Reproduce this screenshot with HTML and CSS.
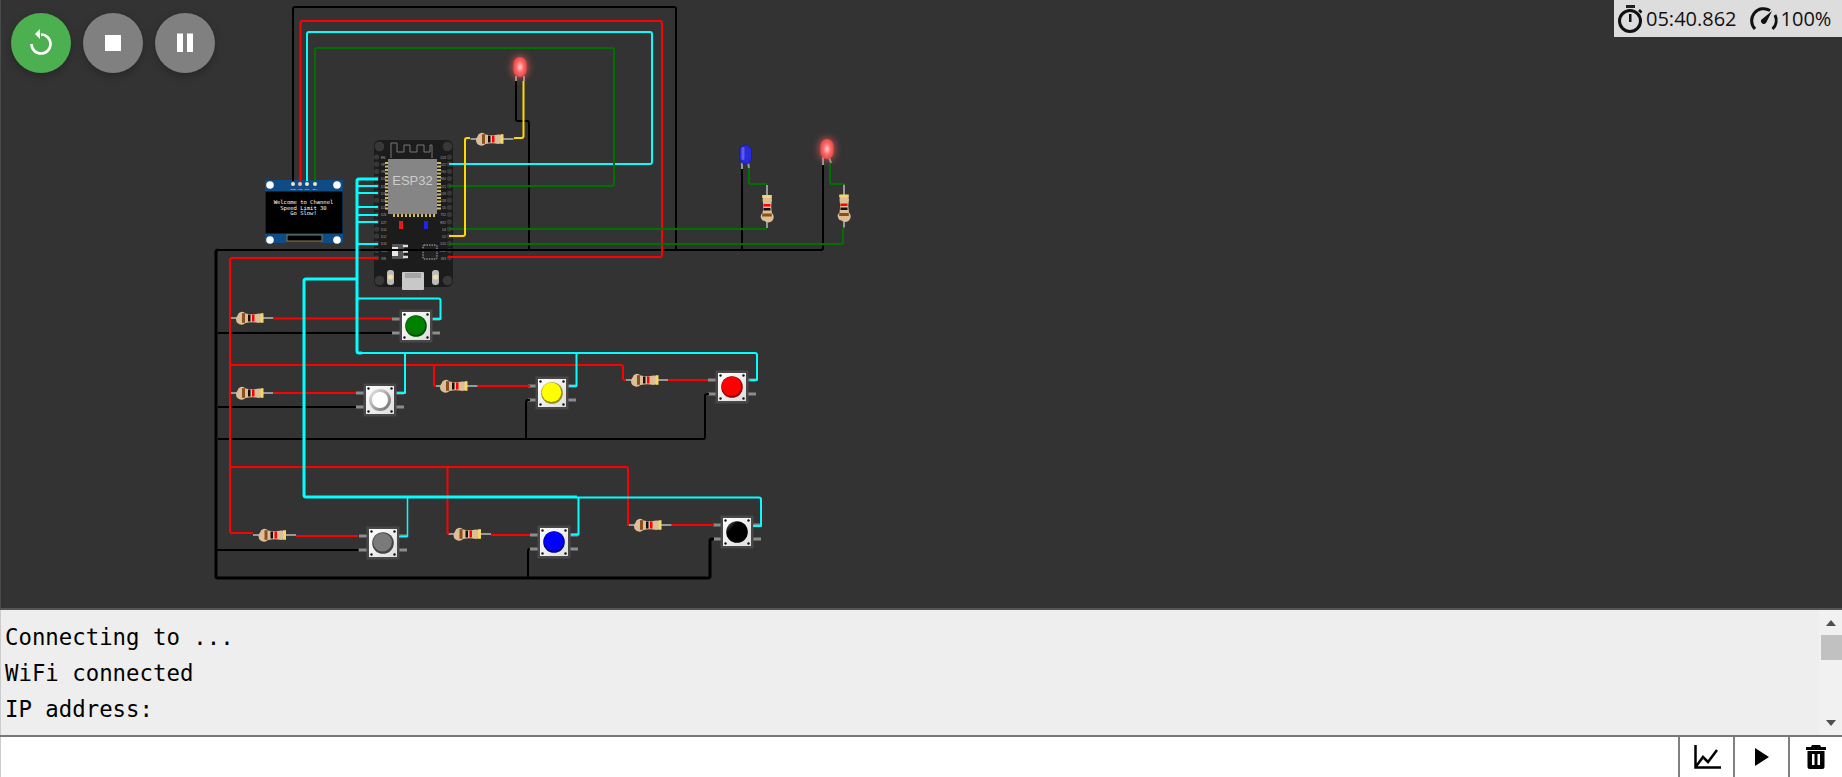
FILE: index.html
```html
<!DOCTYPE html>
<html lang="en">
<head>
  <meta charset="UTF-8" />
  <title>ESP32 simulation</title>
  <link rel="stylesheet" href="styles.css">
</head>
<body>
  <main class="canvas">
    <svg class="board" width="1842" height="608" viewBox="0 0 1842 608">
      <defs>
        <g id="resistor">
          <path class="lead" d="M-21.5 0H21.5" />
          <path class="res-body" d="M-14.5 -2.5a4.5 4.5 0 0 1 8 -2q6.500 1.500 13 0a4.500 4.500 0 0 1 0 9.500q-6.500 -1.500 -13 0a4.500 4.500 0 0 1 -8 -7.500z" />
          <rect x="-10" y="-4.800" width="3" height="9.600" fill="#8b4f1d" />
          <rect x="-4" y="-3.500" width="2.500" height="7" fill="#111" />
          <rect x="0" y="-3.500" width="2.500" height="7" fill="#f00" />
          <rect x="8.500" y="-4.800" width="3" height="9.600" fill="#f3d768" />
        </g>
        <g id="btn-base">
          <rect x="-24" y="-8.500" width="8" height="3" class="pin" />
          <rect x="-24" y="5.500" width="8" height="3" class="pin" />
          <rect x="16" y="-8.500" width="8" height="3" class="pin" />
          <rect x="16" y="5.500" width="8" height="3" class="pin" />
          <rect x="-16.500" y="-16.500" width="33" height="33" fill="#484848" />
          <rect x="-14" y="-14" width="28" height="28" fill="url(#plate)" />
          <circle cx="-11.500" cy="-11.500" r="1.200" fill="#111" />
          <circle cx="11.500" cy="-11.500" r="1.200" fill="#111" />
          <circle cx="-11.500" cy="11.500" r="1.200" fill="#111" />
          <circle cx="11.500" cy="11.500" r="1.200" fill="#111" />
        </g>
        <g id="hole"><circle r="2.600" fill="#383838" /></g>
        <linearGradient id="plate" x1="0" y1="0" x2="1" y2="1">
          <stop offset="0" stop-color="#fff" />
          <stop offset="1" stop-color="#ddd" />
        </linearGradient>
        <linearGradient id="ring" x1="0" y1="0" x2="1" y2="1">
          <stop offset="0" stop-color="#eee" />
          <stop offset="1" stop-color="#666" />
        </linearGradient>
        <linearGradient id="black-cap" x1="0" y1="0" x2="1" y2="1">
          <stop offset="0" stop-color="#777" />
          <stop offset=".3" stop-color="#000" />
        </linearGradient>
        <radialGradient id="lit">
          <stop offset="0" stop-color="#ffd0d0" />
          <stop offset=".55" stop-color="#ff6a6a" />
          <stop offset="1" stop-color="#e84a4a" />
        </radialGradient>
      </defs>

      <!-- ESP32 -->
      <g class="esp">
        <rect x="374" y="140" width="79" height="147" rx="6" fill="#1c1c1c" />
        <circle cx="379.500" cy="146.500" r="4.800" fill="#383838" />
        <circle cx="447.500" cy="146.500" r="4.800" fill="#383838" />
        <circle cx="379.500" cy="280.500" r="4.800" fill="#383838" />
        <circle cx="447.500" cy="280.500" r="4.800" fill="#383838" />
        <path class="antenna" d="M391 158V143H397V152H404V145H410V152H417V145H424V152H430V145H432V158" />
        <use href="#hole" x="376.600" y="157" /><use href="#hole" x="376.600" y="164.200" />
        <use href="#hole" x="376.600" y="171.400" /><use href="#hole" x="376.600" y="178.600" />
        <use href="#hole" x="376.600" y="185.800" /><use href="#hole" x="376.600" y="193" />
        <use href="#hole" x="376.600" y="200.200" /><use href="#hole" x="376.600" y="207.400" />
        <use href="#hole" x="376.600" y="214.600" /><use href="#hole" x="376.600" y="221.800" />
        <use href="#hole" x="376.600" y="229" /><use href="#hole" x="376.600" y="236.200" />
        <use href="#hole" x="376.600" y="243.400" /><use href="#hole" x="376.600" y="250.600" />
        <use href="#hole" x="376.600" y="257.800" />
        <use href="#hole" x="449.400" y="157" /><use href="#hole" x="449.400" y="164.200" />
        <use href="#hole" x="449.400" y="171.400" /><use href="#hole" x="449.400" y="178.600" />
        <use href="#hole" x="449.400" y="185.800" /><use href="#hole" x="449.400" y="193" />
        <use href="#hole" x="449.400" y="200.200" /><use href="#hole" x="449.400" y="207.400" />
        <use href="#hole" x="449.400" y="214.600" /><use href="#hole" x="449.400" y="221.800" />
        <use href="#hole" x="449.400" y="229" /><use href="#hole" x="449.400" y="236.200" />
        <use href="#hole" x="449.400" y="243.400" /><use href="#hole" x="449.400" y="250.600" />
        <use href="#hole" x="449.400" y="257.800" />
        <g class="pin-labels">
          <text x="381" y="159">EN</text><text x="381" y="166">VP</text><text x="381" y="173">VN</text>
          <text x="381" y="180">D34</text><text x="381" y="187.500">D35</text><text x="381" y="194.500">D32</text>
          <text x="381" y="202">D33</text><text x="381" y="209">D25</text><text x="381" y="216">D26</text>
          <text x="381" y="223.500">D27</text><text x="381" y="231">D14</text><text x="381" y="238">D12</text>
          <text x="381" y="245">D13</text><text x="381" y="252">GND</text><text x="381" y="259.500">VIN</text>
          <text class="right" x="446" y="159">D23</text><text class="right" x="446" y="166">D22</text>
          <text class="right" x="446" y="173">TX0</text><text class="right" x="446" y="180">RX0</text>
          <text class="right" x="446" y="187.500">D21</text><text class="right" x="446" y="194.500">D19</text>
          <text class="right" x="446" y="202">D18</text><text class="right" x="446" y="209">D5</text>
          <text class="right" x="446" y="216">TX2</text><text class="right" x="446" y="223.500">RX2</text>
          <text class="right" x="446" y="231">D4</text><text class="right" x="446" y="238">D2</text>
          <text class="right" x="446" y="245">D15</text><text class="right" x="446" y="252">GND</text>
          <text class="right" x="446" y="259.500">3V3</text>
        </g>
        <path class="chip-pins" d="M385 163H441M385 166.500H441M385 170H441M385 173.500H441M385 177H441M385 180.500H441M385 184H441M385 187.500H441M385 191H441M385 194.500H441M385 198H441M385 201.500H441M385 205H441M385 208.500H441" />
        <path class="chip-pins" d="M394 212V217M398 212V217M402 212V217M406 212V217M410 212V217M414 212V217M418 212V217M422 212V217M426 212V217M430 212V217M434 212V217" />
        <rect x="388" y="159" width="49" height="55" fill="#858585" />
        <text class="esp-name" x="412.500" y="185">ESP32</text>
        <rect x="399" y="221" width="4" height="8" fill="#e61a1a" />
        <rect x="424" y="221" width="4" height="8" fill="#2222ee" />
        <rect x="392" y="244" width="12" height="15" fill="#555" />
        <rect x="392" y="247" width="6" height="9" fill="#e8e8e8" />
        <path d="M403 246H408M403 251.500H408M403 257H408" stroke="#ddd" stroke-width="2.500" />
        <rect x="423" y="245" width="14" height="14" rx="1" fill="#222" stroke="#bbb" stroke-width="1" stroke-dasharray="1.500 1" />
        <rect x="402" y="272" width="22" height="18" rx="1" fill="#c8c8c8" />
        <rect x="405" y="273" width="16" height="5" fill="#a5a5a5" />
        <rect x="387" y="270" width="7" height="15" rx="3" fill="#bbb" />
        <circle cx="390.500" cy="277" r="2.600" fill="#f6dda2" />
        <rect x="432" y="270" width="7" height="15" rx="3" fill="#bbb" />
        <circle cx="435.500" cy="277" r="2.600" fill="#f6dda2" />
      </g>

      <!-- OLED -->
      <g class="oled">
        <path d="M265 180H343V243H322L319 240H288L285 243H265Z" fill="#0f4c86" />
        <rect x="265.500" y="191.500" width="77" height="42" fill="#000" />
        <rect x="287" y="235" width="35" height="6" fill="#000" stroke="#8a7a4a" stroke-width="1" />
        <circle cx="270" cy="185" r="3.800" fill="#fff" />
        <circle cx="337" cy="185" r="3.800" fill="#fff" />
        <circle cx="270" cy="240" r="3.800" fill="#fff" />
        <circle cx="337" cy="240" r="3.800" fill="#fff" />
        <circle cx="293" cy="184" r="2" fill="#f3e3c0" />
        <circle cx="300" cy="184" r="2" fill="#f3c0b0" />
        <circle cx="307" cy="184" r="2" fill="#f3e3c0" />
        <circle cx="315" cy="184" r="2" fill="#f3e3c0" />
        <text class="oled-pin" x="293" y="190">GND</text>
        <text class="oled-pin" x="300" y="190">VCC</text>
        <text class="oled-pin" x="307" y="190">SCL</text>
        <text class="oled-pin" x="315" y="190">SDA</text>
        <text class="oled-text" x="303.500" y="204">Welcome to Channel</text>
        <text class="oled-text" x="303.500" y="209.500">Speed Limit 30</text>
        <text class="oled-text" x="303.500" y="215">Go Slow!</text>
      </g>

      <!-- LEDs -->
      <path class="lead" d="M516 76V81M524 76L524 81" />
      <path class="lead" d="M742 162V169M748 162L749 168" />
      <path class="lead" d="M823 157V165M829 157L831 163" />
      <rect class="led-lit" x="513.500" y="57" width="13" height="20" rx="6.500" />
      <rect class="led-blue" x="739.500" y="145" width="12" height="19" rx="6" />
      <rect x="741.500" y="147" width="3" height="13" rx="1.500" fill="#5a5af0" />
      <rect class="led-lit" x="820.500" y="139" width="13" height="20" rx="6.500" />

      <!-- Resistors -->
      <use href="#resistor" transform="translate(492 139)" />
      <use href="#resistor" transform="translate(767 206.500) rotate(-90)" />
      <use href="#resistor" transform="translate(844 206) rotate(-90)" />
      <use href="#resistor" transform="translate(252 318)" />
      <use href="#resistor" transform="translate(252 393)" />
      <use href="#resistor" transform="translate(456 386)" />
      <use href="#resistor" transform="translate(647 380)" />
      <use href="#resistor" transform="translate(274.500 535)" />
      <use href="#resistor" transform="translate(469.500 534)" />
      <use href="#resistor" transform="translate(650 525)" />

      <!-- Push buttons -->
      <g transform="translate(416 326)">
        <use href="#btn-base" /><circle r="10.800" fill="#004d00" /><circle cx="-.5" cy="-.8" r="9.800" fill="#008000" />
      </g>
      <g transform="translate(380 400)">
        <use href="#btn-base" /><circle r="11" fill="url(#ring)" /><circle r="8" fill="#fff" />
      </g>
      <g transform="translate(552 393)">
        <use href="#btn-base" /><circle r="10.800" fill="#8f8f00" /><circle cx="-.5" cy="-.8" r="9.800" fill="#ff0" />
      </g>
      <g transform="translate(732 387)">
        <use href="#btn-base" /><circle r="10.800" fill="#8f0000" /><circle cx="-.5" cy="-.8" r="9.800" fill="#f00" />
      </g>
      <g transform="translate(383 543)">
        <use href="#btn-base" /><circle r="10.800" fill="#444" /><circle cx="-.5" cy="-.8" r="9.300" fill="#7a7a7a" />
      </g>
      <g transform="translate(554 542)">
        <use href="#btn-base" /><circle r="10.800" fill="#00007a" /><circle cx="-.3" cy="-.8" r="9.800" fill="#00f" />
      </g>
      <g transform="translate(737 532)">
        <use href="#btn-base" /><circle r="10.800" fill="url(#black-cap)" />
      </g>

      <!-- Wires -->
      <g class="wires black">
        <path d="M293 181V9Q293 7 295 7H674Q676 7 676 9V250" />
        <path d="M516 81V119Q516 121 518 121H527Q529 121 529 123V250" />
        <path d="M742 169V250M823 165V248Q823 250 821 250" />
        <path d="M821 250H218" />
        <path class="thick" d="M218 250Q216 250 216 252V576Q216 578 218 578H708Q710 578 710 576V541Q710 539 712 539H714" />
        <path d="M218 333H392M218 407H356M218 439H703Q705 439 705 437V396Q705 394 707 394H709" />
        <path d="M526 439V402Q526 400 528 400H530" />
        <path d="M218 550H358M216 550H218M528 578V551Q528 549 530 549" />
      </g>
      <g class="wires red">
        <path d="M300.500 181V23Q300.500 21 302.500 21H660Q662 21 662 23V255Q662 257 660 257H448" />
        <path d="M378 258H232Q230 258 230 260V531Q230 533 232 533H253" />
        <path d="M230 365H621Q623 365 623 367V378Q623 380 625 380H626" />
        <path d="M434 365V386H436M478 386H530" />
        <path d="M273 318.500H392M273 393H356" />
        <path d="M668 380H708" />
        <path d="M230 467H626Q628 467 628 469V525H629M672 525H714" />
        <path d="M447.500 467V533.500H449M491 535H530M296 536H358" />
      </g>
      <g class="wires cyan">
        <path d="M307 181V34Q307 32 309 32H650Q652 32 652 34V162Q652 164 650 164H449" />
        <path class="thick" d="M378 179H359Q357 179 357 181V351Q357 353 359 353H362" />
        <path d="M362 353H755Q757 353 757 355V380H750" />
        <path d="M378 186H358M378 193H358M378 207H358M378 215H358M378 222H358M378 244H358" />
        <path d="M358 298.500H438.500Q440.500 298.500 440.500 300.500V319H433" />
        <path d="M405 353V393H397" />
        <path d="M576.500 353V386H569" />
        <path class="thick" d="M357 279H306Q304 279 304 281V495Q304 497 306 497H577" />
        <path d="M577 497.500H759Q761 497.500 761 499.500V526H753" />
        <path class="thin" d="M407.500 497V536.500H399" />
        <path d="M578.500 497V534.500H571" />
      </g>
      <g class="wires green">
        <path d="M315 181V50Q315 48 317 48H612Q614 48 614 50V184Q614 186 612 186H449" />
        <path d="M449 229H767M449 244H841Q843 244 843 242V228" />
        <path d="M749 168V182Q749 184 751 184H767" />
        <path d="M830 163V182Q830 184 832 184H844" />
      </g>
      <g class="wires yellow">
        <path d="M523.500 81V136Q523.500 138 521.500 138H514" />
        <path d="M470 138H467Q465 138 465 140V234Q465 236 463 236H449" />
      </g>
    </svg>

    <div class="controls">
      <button class="round green-btn">
        <svg width="60" height="60" viewBox="0 0 60 60"><path class="icon-line" d="M30 21.500A9.500 9.500 0 1 1 20.500 31" /><path fill="#fff" d="M29 16V26L24 21Z" /></svg>
      </button>
      <button class="round">
        <svg width="60" height="60" viewBox="0 0 60 60"><rect x="22" y="22" width="16" height="16" fill="#fff" /></svg>
      </button>
      <button class="round">
        <svg width="60" height="60" viewBox="0 0 60 60"><rect x="22" y="20.500" width="6" height="18.500" fill="#fff" /><rect x="32" y="20.500" width="6" height="18.500" fill="#fff" /></svg>
      </button>
    </div>

    <div class="timer">
      <svg width="26" height="32" viewBox="0 0 26 32">
        <rect x="9" y="2" width="9" height="3" fill="#222" />
        <circle cx="13" cy="18" r="10.500" fill="none" stroke="#111" stroke-width="3" />
        <rect x="12" y="11" width="2.500" height="8" fill="#111" />
        <path d="M22 7l2.500 2.500" stroke="#111" stroke-width="2.500" />
      </svg>
      <span class="time">05:40.862</span>
      <svg class="gauge" width="30" height="30" viewBox="0 0 30 30">
        <path d="M6 25A12 12 0 0 1 21 6.500M26 11A12 12 0 0 1 23.500 25" fill="none" stroke="#111" stroke-width="3" />
        <path d="M23 7L17 19A3 3 0 0 1 12 16Z" fill="#111" />
      </svg>
      <span>100%</span>
    </div>
  </main>

  <section class="monitor">
    <pre class="output">Connecting to ...
WiFi connected
IP address:</pre>
    <div class="scrollbar">
      <span class="arrow up"></span>
      <span class="thumb"></span>
      <span class="arrow down"></span>
    </div>
  </section>

  <footer class="input-row">
    <input class="serial-input" type="text" />
    <button class="tool">
      <svg width="28" height="26" viewBox="0 0 28 26"><path d="M2.500 1V23.500H28M3 22.500L10 13L15 18L24 6" fill="none" stroke="#000" stroke-width="2.500" /></svg>
    </button>
    <button class="tool">
      <svg width="16" height="20" viewBox="0 0 16 20"><path d="M1 1L15 10L1 19Z" fill="#000" /></svg>
    </button>
    <button class="tool">
      <svg width="22" height="26" viewBox="0 0 22 26"><path fill-rule="evenodd" d="M7 1H15L16 3H21V6H1V3H6ZM2.500 7H19.500V23Q19.500 25 17.500 25H4.500Q2.500 25 2.500 23ZM7 10V21H9.500V10ZM12.500 10V21H15V10Z" fill="#000" /></svg>
    </button>
  </footer>
</body>
</html>
```
FILE: styles.css
```css
html, body {
  margin: 0;
  height: 100%;
  overflow: hidden;
}
body {
  display: flex;
  flex-direction: column;
  font-family: "Open Sans", sans-serif;
  background-color: #fff;
}

/* canvas */
.canvas {
  position: relative;
  height: 608px;
  background-color: #333;
  box-shadow: inset 1px 0 0 #4a4a4a;
  flex: none;
}
.board {
  display: block;
}
.controls {
  position: absolute;
  top: 13px;
  left: 11px;
  display: flex;
  gap: 12px;
}
.round {
  width: 60px;
  height: 60px;
  padding: 0;
  border: none;
  border-radius: 50%;
  background-color: #808080;
  box-shadow: 0 3px 8px rgba(0,0,0,0.25);
}
.round svg {
  display: block;
}
.green-btn {
  background-color: #4caf50;
}
.icon-line {
  fill: none;
  stroke: #fff;
  stroke-width: 2.6;
}
.timer {
  position: absolute;
  top: 0;
  right: 0;
  width: 228px;
  height: 37px;
  box-sizing: border-box;
  padding-left: 3px;
  display: flex;
  align-items: center;
  background-color: #ddd;
  color: #111;
  font-size: 20px;
}
.time {
  margin-left: 3px;
}
.gauge {
  margin-left: 12px;
  margin-right: 2px;
}

/* circuit parts */
.wires path {
  fill: none;
  stroke-width: 2;
  stroke-linejoin: round;
}
.wires .thick {
  stroke-width: 3;
}
.wires .thin {
  stroke-width: 1.5;
}
.black path { stroke: #000; }
.red path { stroke: #f00; }
.cyan path { stroke: #0ff; }
.green path { stroke: #007000; }
.yellow path { stroke: #ffd800; }
.lead {
  fill: none;
  stroke: #999;
  stroke-width: 2;
}
.pin {
  fill: #8c8c8c;
}
.res-body {
  fill: #dcbf98;
}
.led-lit {
  fill: url(#lit);
  filter: drop-shadow(0 0 4px #ff5a5a);
}
.led-blue {
  fill: #2a2ad8;
  stroke: #1a1ab0;
  stroke-width: 1;
}
.antenna {
  fill: none;
  stroke: #777;
  stroke-width: 1;
}
.chip-pins {
  fill: none;
  stroke: #cdbb6a;
  stroke-width: 2;
}
.esp-name {
  fill: #ccc;
  font-family: "Liberation Sans", sans-serif;
  font-size: 13px;
  text-anchor: middle;
}
.pin-labels text {
  fill: #aaa;
  font-family: "Liberation Sans", sans-serif;
  font-size: 3px;
}
.pin-labels .right {
  text-anchor: end;
}
.oled-pin {
  fill: #ddd;
  font-family: "Liberation Sans", sans-serif;
  font-size: 2.5px;
  text-anchor: middle;
}
.oled-text {
  fill: #fff;
  font-family: "DejaVu Sans Mono", monospace;
  font-size: 5.5px;
  text-anchor: middle;
}

/* serial monitor */
.monitor {
  height: 129px;
  flex: none;
  box-sizing: border-box;
  border-top: 2px solid #555;
  border-bottom: 2px solid #777;
  display: flex;
  background-color: #eee;
  box-shadow: inset 1px 0 0 #ccc;
}
.output {
  flex: 1;
  margin: 0;
  padding: 9px 0 0 5px;
  font-family: "DejaVu Sans Mono", monospace;
  font-size: 22.35px;
  line-height: 36px;
  color: #000;
}
.scrollbar {
  width: 23px;
  display: flex;
  flex-direction: column;
  align-items: flex-end;
  background-color: #f1f1f1;
}
.thumb {
  width: 21px;
  height: 25px;
  background-color: #c1c1c1;
}
.arrow {
  width: 0;
  height: 0;
  margin-right: 6px;
  border-left: 5.5px solid transparent;
  border-right: 5.5px solid transparent;
}
.arrow.up {
  margin-top: 10px;
  margin-bottom: 9px;
  border-bottom: 6px solid #505050;
}
.arrow.down {
  margin-top: 60px;
  border-top: 6px solid #505050;
}

/* bottom row */
.input-row {
  flex: 1;
  display: flex;
  background-color: #fff;
}
.serial-input {
  flex: 1;
  min-width: 0;
  border: none;
  border-left: 1px solid #ccc;
  outline: none;
  padding: 0;
}
.tool {
  width: 55px;
  padding: 0;
  border: none;
  border-left: 2px solid #808080;
  background: #fff;
  display: flex;
  align-items: center;
  justify-content: center;
}
.tool:last-child {
  width: 54px;
}
```
